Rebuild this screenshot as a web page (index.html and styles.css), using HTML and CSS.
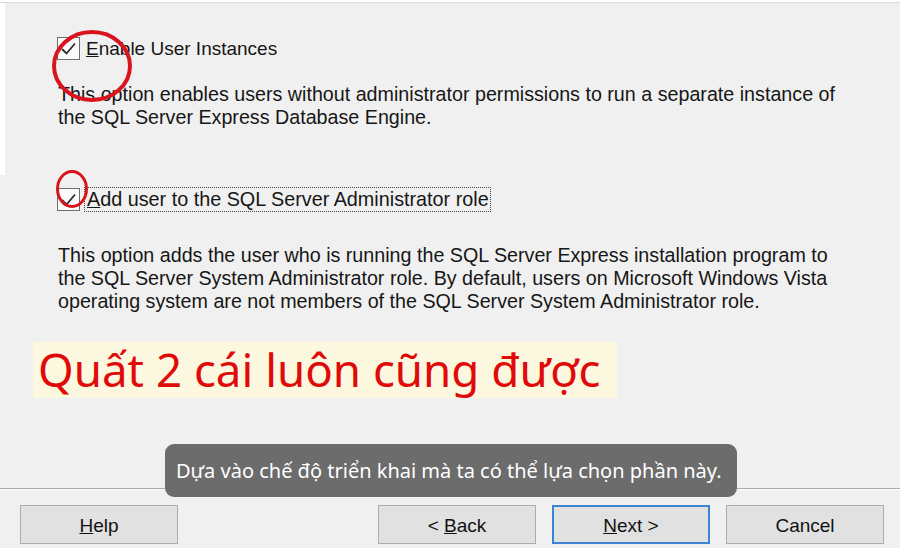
FILE: index.html
```html
<!DOCTYPE html>
<html lang="vi">
<head>
<meta charset="utf-8">
<title>SQL Server Express Setup</title>
<link rel="stylesheet" href="styles.css">
</head>
<body>
<div class="screen">
  <div class="dialog">
    <section class="top">
      <div class="check">
        <span class="box"><svg viewBox="0 0 23 23" width="23" height="23"><path d="M5 12 L9.5 16.5 L18 6.5" fill="none" stroke="#2b2b2b" stroke-width="1.8"/></svg></span>
        <span class="label"><u>E</u>nable User Instances</span>
      </div>
      <p class="desc">This option enables users without administrator permissions to run a separate instance of<br>the SQL Server Express Database Engine.</p>
    </section>
    <section class="main">
      <div class="check">
        <span class="box"><svg viewBox="0 0 23 23" width="23" height="23"><path d="M5 12 L9.5 16.5 L18 6.5" fill="none" stroke="#2b2b2b" stroke-width="1.8"/></svg></span>
        <span class="label focus"><u>A</u>dd user to the SQL Server Administrator role</span>
      </div>
      <p class="desc two">This option adds the user who is running the SQL Server Express installation program to<br>the SQL Server System Administrator role. By default, users on Microsoft Windows Vista<br>operating system are not members of the SQL Server System Administrator role.</p>
      <div class="note">Quất 2 cái luôn cũng được</div>
    </section>
    <footer class="footer">
      <div class="buttons">
        <button class="btn"><u>H</u>elp</button>
        <button class="btn back">&lt; <u>B</u>ack</button>
        <button class="btn primary"><u>N</u>ext &gt;</button>
        <button class="btn">Cancel</button>
      </div>
    </footer>
  </div>
  <div class="tooltip">Dựa vào chế độ triển khai mà ta có thể lựa chọn phần này.</div>
  <svg class="marks" width="906" height="557" viewBox="0 0 906 557">
    <ellipse cx="92" cy="66" rx="38" ry="34" fill="none" stroke="#d9141e" stroke-width="4"/>
    <ellipse cx="72" cy="189" rx="14.5" ry="17.5" fill="none" stroke="#d9141e" stroke-width="3"/>
  </svg>
</div>
</body>
</html>
```
FILE: styles.css
```css
html, body {
  margin: 0;
  padding: 0;
  background: #ffffff;
}
body {
  font-family: "Liberation Sans", Arial, sans-serif;
  color: #161616;
}
.screen {
  position: relative;
  width: 906px;
  height: 557px;
  overflow: hidden;
}
.dialog {
  margin-top: 2px;
  width: 900px;
  border-top: 1px solid #d9d9d9;
}
.top {
  margin-left: 5px;
  height: 172px;
  box-sizing: border-box;
  padding: 34px 0 0 52px;
  background: #f0f0f0;
}
.main {
  background: #f0f0f0;
  height: 313px;
  box-sizing: border-box;
  padding: 13px 0 0 57px;
}
.check {
  display: flex;
  align-items: center;
  height: 23px;
}
.box {
  width: 23px;
  height: 23px;
  box-sizing: border-box;
  border: 1px solid #6f6f6f;
  background: #fbfbfb;
  display: flex;
  align-items: center;
  justify-content: center;
  flex: none;
}
.box svg {
  display: block;
  margin: -1px;
}
.label {
  margin-left: 6px;
  font-size: 19px;
  line-height: 23px;
}
.label.focus {
  margin-left: 4px;
  padding: 0 1px 0 2px;
  border: 1px dotted #444;
  font-size: 19.8px;
  line-height: 23px;
}
.desc {
  margin: 23px 0 0 1px;
  font-size: 19.7px;
  line-height: 23px;
}
.desc.two {
  margin-top: 33px;
}
.note {
  margin: 29px 0 0 -24px;
  width: 584px;
  height: 56px;
  box-sizing: border-box;
  padding-left: 5px;
  background: #fbf8df;
  color: #e10a0a;
  font-family: "Noto Sans", "Open Sans", sans-serif;
  font-size: 45.7px;
  line-height: 54px;
  white-space: nowrap;
}
.footer {
  background: #f0f0f0;
  border-top: 1px solid #a9a9a9;
  box-shadow: inset 0 1px 0 #ffffff;
  height: 60px;
  box-sizing: border-box;
  padding: 16px 16px 0 20px;
}
.buttons {
  display: flex;
  gap: 16px;
}
.btn {
  width: 158px;
  height: 39px;
  box-sizing: border-box;
  border: 1px solid #adadad;
  background: #e1e1e1;
  color: #111;
  font-family: "Liberation Sans", Arial, sans-serif;
  font-size: 19px;
  padding: 2px 0 0;
}
.btn.back {
  margin-left: auto;
}
.btn.primary {
  border: 2px solid #3b84d2;
}
.tooltip {
  position: absolute;
  left: 165px;
  top: 444px;
  width: 572px;
  height: 53px;
  box-sizing: border-box;
  padding-left: 11px;
  border-radius: 9px;
  background: #6c6c6c;
  color: #ffffff;
  font-family: "Noto Sans", "Open Sans", sans-serif;
  font-size: 20px;
  line-height: 53px;
  white-space: nowrap;
}
.marks {
  position: absolute;
  left: 0;
  top: 0;
  pointer-events: none;
}
```
